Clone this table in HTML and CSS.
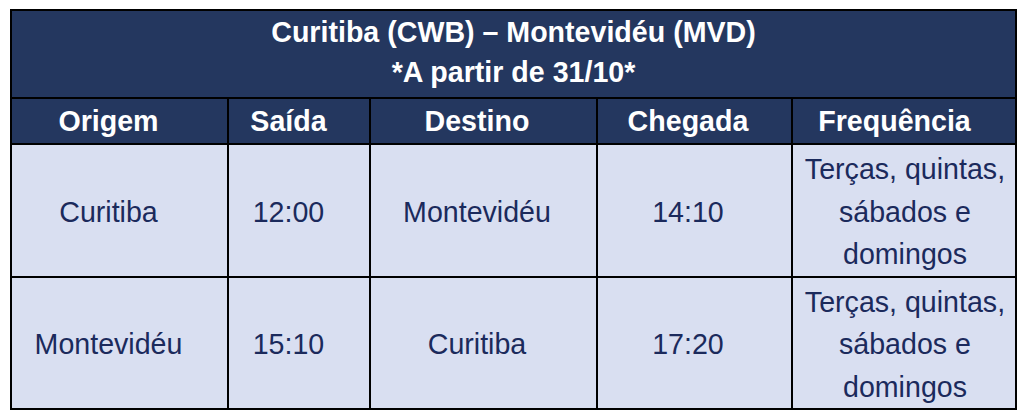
FILE: index.html
```html
<!DOCTYPE html>
<html lang="pt">
<head>
<meta charset="utf-8">
<link rel="stylesheet" href="styles.css">
</head>
<body>
<table class="voos">
  <colgroup>
    <col class="c1"><col class="c2"><col class="c3"><col class="c4"><col class="c5">
  </colgroup>
  <thead>
    <tr class="titulo">
      <th colspan="5">Curitiba (CWB) – Montevidéu (MVD)<br>*A partir de 31/10*</th>
    </tr>
    <tr class="cab">
      <th class="k1">Origem</th><th class="k2">Saída</th><th class="k3">Destino</th><th class="k4">Chegada</th><th class="k5">Frequência</th>
    </tr>
  </thead>
  <tbody>
    <tr>
      <td class="k1">Curitiba</td><td class="k2">12:00</td><td class="k3">Montevidéu</td><td class="k4">14:10</td><td class="freq">Terças, quintas, sábados e domingos</td>
    </tr>
    <tr>
      <td class="k1">Montevidéu</td><td class="k2">15:10</td><td class="k3">Curitiba</td><td class="k4">17:20</td><td class="freq">Terças, quintas, sábados e domingos</td>
    </tr>
  </tbody>
</table>
</body>
</html>
```
FILE: styles.css
```css
html, body {
  margin: 0;
  padding: 0;
  background: #ffffff;
}
body {
  padding: 9px 0 0 10px;
}
.voos {
  border-collapse: collapse;
  table-layout: fixed;
  width: 1007px;
  font-family: "Liberation Sans", Arial, sans-serif;
  font-size: 28.6px;
}
.c1 { width: 217px; }
.c2 { width: 142px; }
.c3 { width: 227px; }
.c4 { width: 195px; }
.voos th, .voos td {
  border: 2px solid #000000;
  text-align: center;
  vertical-align: middle;
  padding: 0;
}
.voos th {
  background: #24375f;
  color: #ffffff;
  font-weight: bold;
}
.titulo th {
  height: 88px;
  line-height: 40px;
  padding-bottom: 4px;
  box-sizing: border-box;
}
.cab th {
  height: 44px;
  line-height: 32px;
}
.voos td {
  background: #d9dff1;
  color: #1b2a5c;
  height: 131px;
  line-height: 42.5px;
  padding-top: 3px;
  box-sizing: border-box;
}
.voos .k1 { padding-right: 22px; }
.voos .k2 { padding-right: 21px; }
.voos .k3 { padding-right: 13px; }
.voos .k4 { padding-right: 13px; }
.voos .k5 { padding-right: 19px; }
.voos .freq { padding-left: 4px; padding-right: 2px; }
```
